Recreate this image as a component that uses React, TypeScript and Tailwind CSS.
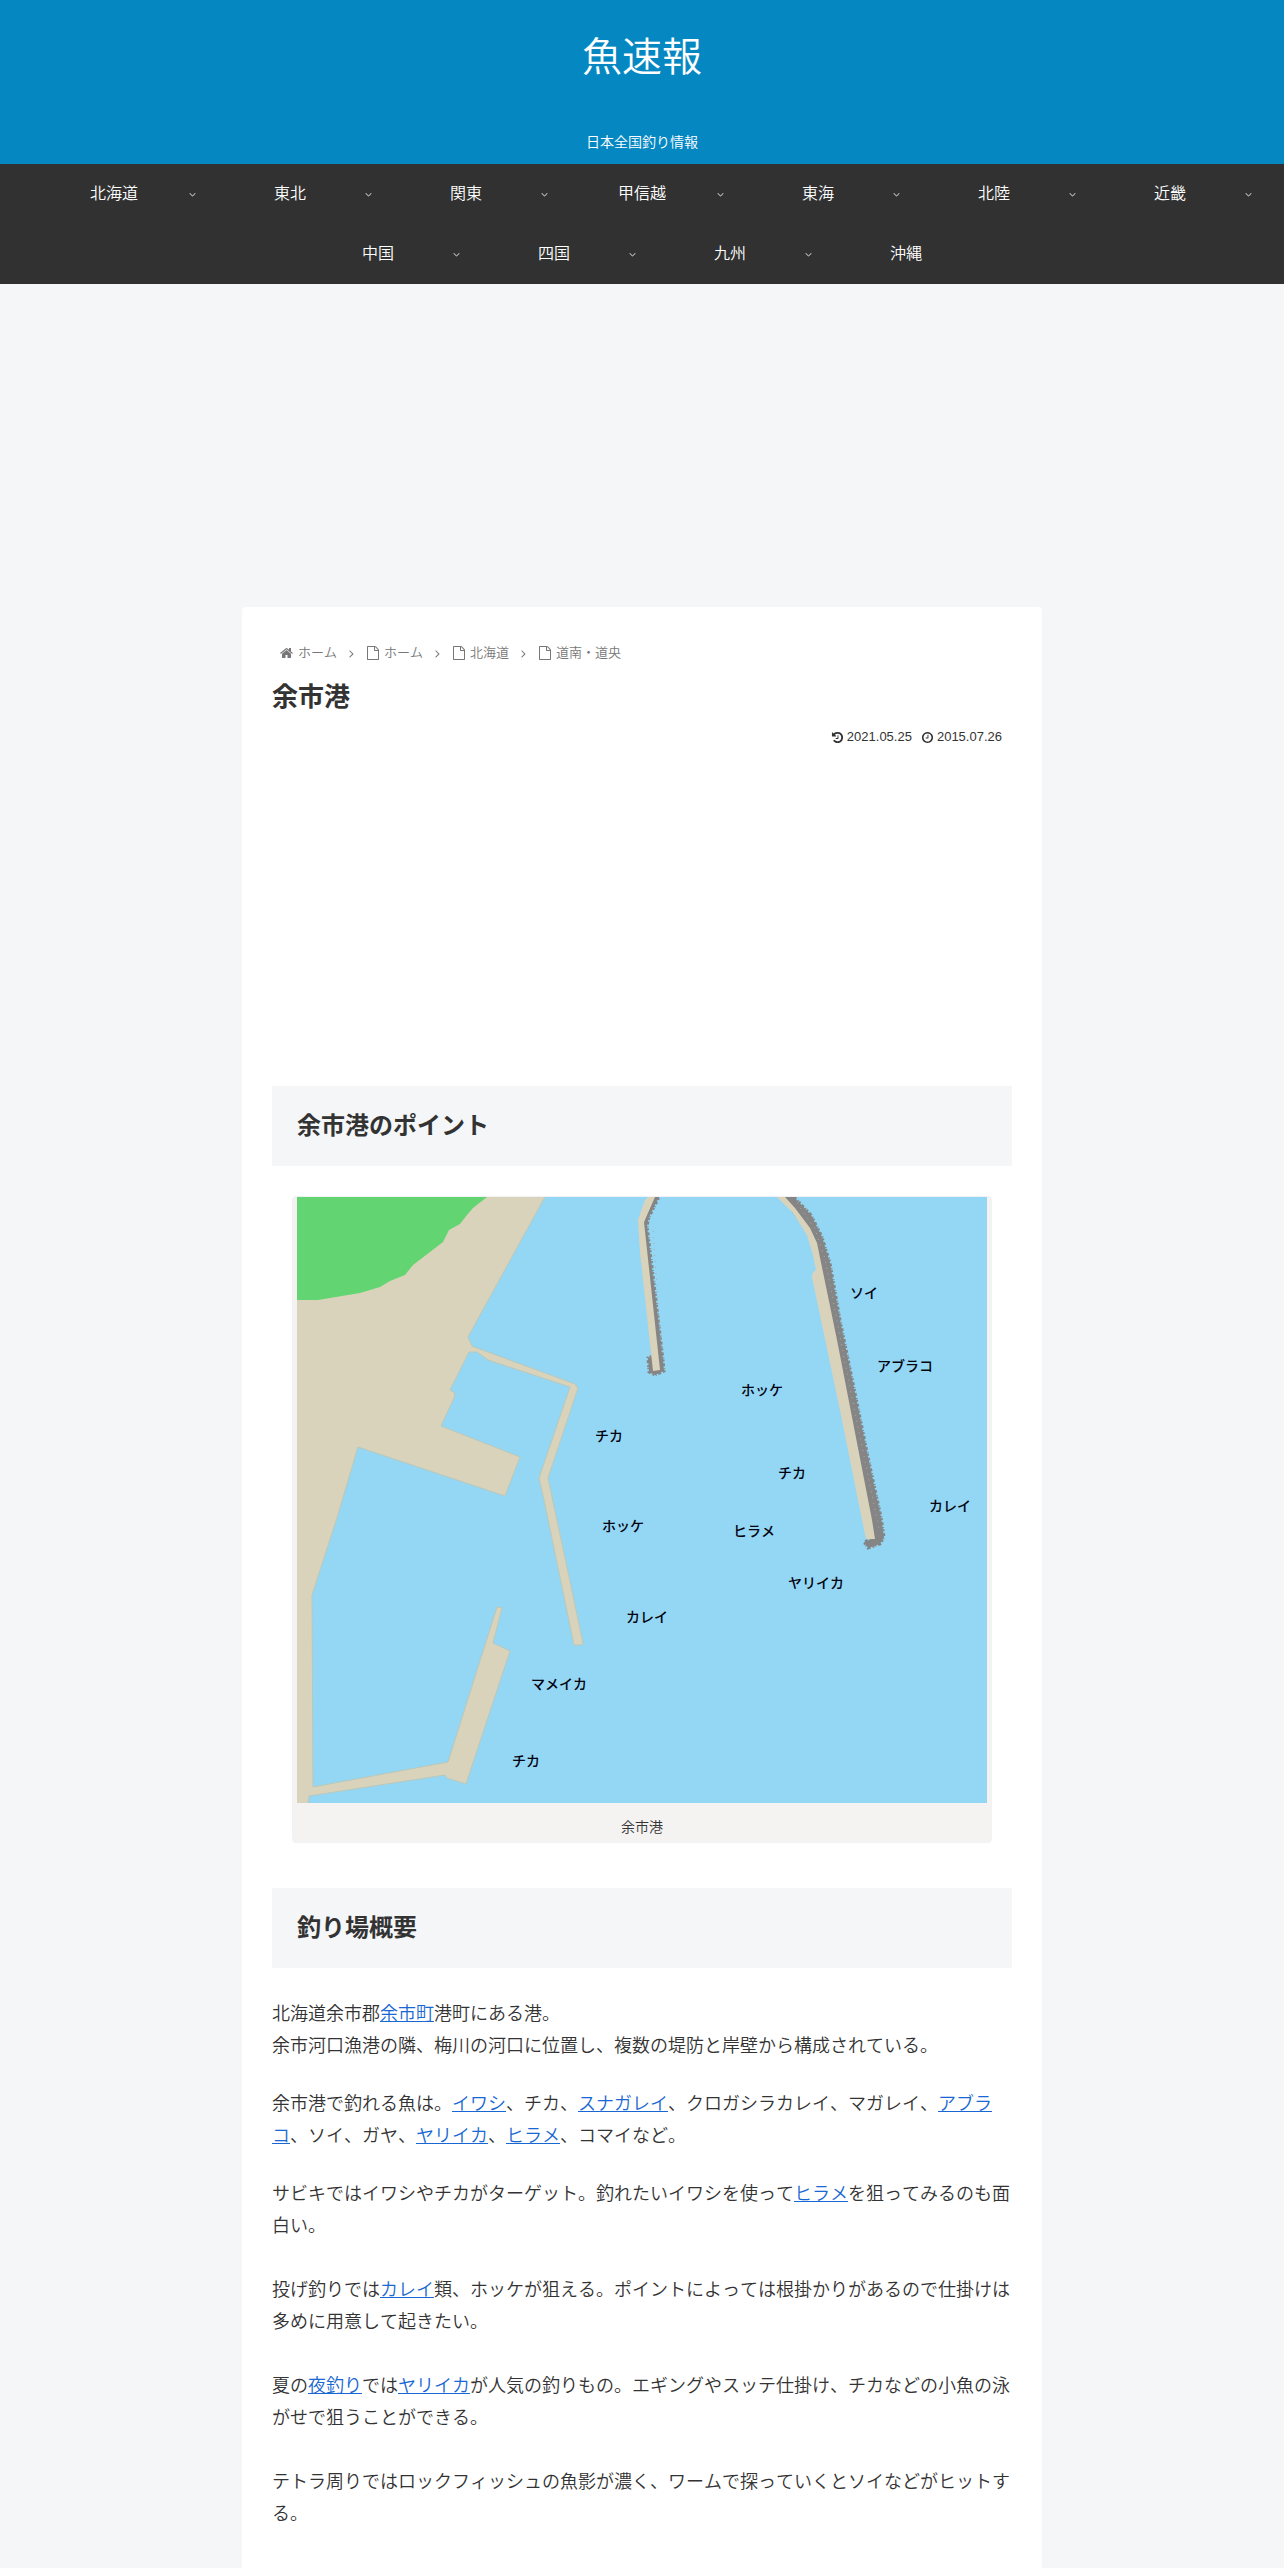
import { ReactNode } from 'react';

const ICONS = {
  home: 'M1408 992v480q0 26-19 45t-45 19h-384v-384h-256v384h-384q-26 0-45-19t-19-45v-480q0-1 .5-3t.5-3l575-474 575 474q1 2 1 6zm223-69l-62 74q-8 9-21 11h-3q-13 0-21-7l-692-577-692 577q-12 8-24 7-13-2-21-11l-62-74q-8-10-7-23.5t11-21.5l719-599q32-26 76-26t76 26l244 204v-195q0-14 9-23t23-9h192q14 0 23 9t9 23v408l219 182q10 8 11 21.5t-7 23.5z',
  file: 'M1596 380q28 28 48 76t20 88v1152q0 40-28 68t-68 28h-1344q-40 0-68-28t-28-68v-1600q0-40 28-68t68-28h896q40 0 88 20t76 48zm-444-244v376h376q-10-29-22-41l-313-313q-12-12-41-22zm384 1528v-1024h-416q-40 0-68-28t-28-68v-416h-768v1536h1280z',
  right: 'M1171 960q0 13-10 23l-466 466q-10 10-23 10t-23-10l-50-50q-10-10-10-23t10-23l393-393-393-393q-10-10-10-23t10-23l50-50q10-10 23-10t23 10l466 466q10 10 10 23z',
  down: 'M1395 736q0 13-10 23l-466 466q-10 10-23 10t-23-10l-466-466q-10-10-10-23t10-23l50-50q10-10 23-10t23 10l393 393 393-393q10-10 23-10t23 10l50 50q10 10 10 23z',
  clock: 'M1024 544v448q0 14-9 23t-23 9h-320q-14 0-23-9t-9-23v-64q0-14 9-23t23-9h224v-352q0-14 9-23t23-9h64q14 0 23 9t9 23zm416 352q0-148-73-273t-198-198-273-73-273 73-198 198-73 273 73 273 198 198 273 73 273-73 198-198 73-273zm224 0q0 209-103 385.5t-279.5 279.5-385.5 103-385.5-103-279.5-279.5-103-385.5 103-385.5 279.5-279.5 385.5-103 385.5 103 279.5 279.5 103 385.5z',
  history: 'M1664 896q0 156-61 298t-164 245-245 164-298 61q-172 0-327-72.5t-264-204.5q-7-10-6.5-22.5t8.5-20.5l137-138q10-9 25-9 16 2 23 12 73 95 179 147t225 52q104 0 198.5-40.5t163.5-109.5 109.5-163.5 40.5-198.5-40.5-198.5-109.5-163.5-163.5-109.5-198.5-40.5q-98 0-188 35.5t-160 101.5l137 138q31 30 14 69-17 40-59 40h-448q-26 0-45-19t-19-45v-448q0-42 40-59 39-17 69 14l130 129q107-101 244.5-156.5t284.5-55.5q156 0 298 61t245 164 164 245 61 298zm-640-288v448q0 14-9 23t-23 9h-320q-14 0-23-9t-9-23v-64q0-14 9-23t23-9h224v-352q0-14 9-23t23-9h64q14 0 23 9t9 23z',
};

const Icon = ({ name, className }: { name: keyof typeof ICONS; className: string }) => (
  <svg viewBox="0 0 1792 1792" fill="currentColor" className={className} aria-hidden="true">
    <path d={ICONS[name]} />
  </svg>
);

const regions = ['北海道', '東北', '関東', '甲信越', '東海', '北陸', '近畿', '中国', '四国', '九州', '沖縄'];

const crumbs = ['ホーム', 'ホーム', '北海道', '道南・道央'];

const fishLabels = [
  { name: 'ソイ', x: 553, y: 96 },
  { name: 'アブラコ', x: 580, y: 169 },
  { name: 'ホッケ', x: 444, y: 193 },
  { name: 'チカ', x: 298, y: 239 },
  { name: 'チカ', x: 481, y: 276 },
  { name: 'カレイ', x: 632, y: 309 },
  { name: 'ホッケ', x: 305, y: 329 },
  { name: 'ヒラメ', x: 436, y: 334 },
  { name: 'ヤリイカ', x: 491, y: 386 },
  { name: 'カレイ', x: 329, y: 420 },
  { name: 'マメイカ', x: 234, y: 487 },
  { name: 'チカ', x: 215, y: 564 },
];

const SiteHeader = () => (
  <header className="bg-[#0588c2] text-center text-white">
    <div className="pt-[25px] pb-[45px]">
      <a href="#" className="block text-[40px] leading-[64px]">魚速報</a>
    </div>
    <p className="pb-[14px] text-sm leading-4">日本全国釣り情報</p>
  </header>
);

const GlobalNav = () => (
  <nav className="bg-[#313131] text-white">
    <ul className="mx-auto flex max-w-[1236px] flex-wrap justify-center">
      {regions.map((region) => (
        <li key={region} className="relative w-[176px]">
          <a href="#" className="block text-center text-base leading-[60px]">{region}</a>
          {region !== '沖縄' && <Icon name="down" className="absolute top-[25px] right-1 size-[11px] text-[#c5c5c5]" />}
        </li>
      ))}
    </ul>
  </nav>
);

const Breadcrumbs = () => (
  <ol className="flex items-center px-2 text-[13px] leading-5 text-[#777]">
    {crumbs.map((crumb, i) => (
      <li key={i} className="flex items-center">
        {i > 0 && <Icon name="right" className="mx-2 size-[13px]" />}
        <a href="#" className="flex items-center gap-1">
          <Icon name={i === 0 ? 'home' : 'file'} className="size-[14px]" />
          {crumb}
        </a>
      </li>
    ))}
  </ol>
);

const Heading = ({ children }: { children: ReactNode }) => (
  <h2 className="bg-[#f4f6f8] px-[25px] py-5 text-2xl leading-10 font-bold">{children}</h2>
);

const Link = ({ children }: { children: ReactNode }) => (
  <a href="#" className="text-[#1967d2] underline">{children}</a>
);

const PortMap = () => (
  <svg viewBox="0 0 690 606" className="block w-full" role="img" aria-label="余市港">
    <rect width="690" height="606" fill="#94d7f5" />
    {/* 陸地と内側の防波堤 */}
    <path
      d="M-2 -2H249L171 140L175 149L180 151L278 187L281 191L251 281L260 323L286 446L285 448H277L247 303L242 281L273 190L191 163L180 155H172L153 193L158 196L157 201L144 229L223 260L208 299L61 250L40 321L15 398L16 590L151 565L200 410L205 411L196 446L213 454L169 587L150 581L148 578L12 599L11 608H-2Z"
      fill="#dad3bb"
      stroke="#b9c8ba"
      strokeWidth="1"
    />
    <path d="M0 0H190L176 11L170 18L163 27L152 33L146 45L116 68L108 78L93 84L83 90L63 96L21 103H0Z" fill="#62d572" />
    {/* テトラ */}
    <g fill="#858585" stroke="#858585" strokeWidth="3" strokeDasharray="3 2 1 1 2 2">
      <path d="M356 0H362L352 20L350 29L358 95L366 163L367 174L358 178L352 175L351 161L356 159L346 28Z" />
      <path d="M486 0H497L514 18L525 40L533 66L543 123L558 196L571 260L584 320L587 340L583 347L571 351L567 345L575 342L572 310L515 40Z" />
    </g>
    <g fill="none" stroke="#b0aaa6" strokeWidth="1" strokeDasharray="1 5">
      <path d="M356 34L365 160" />
      <path d="M500 6L518 32L528 62L552 186L582 332" />
    </g>
    {/* 外側の防波堤 */}
    <g fill="#dad3bb">
      <path d="M351 0H358L347 25L363 173L356 174L343 55L341 23L348 3Z" />
      <path d="M480 0H488L498 11L513 31L520 46L540 143L575 323L578 342H569L561 303L545 223L515 80L516 75L519 73L516 58L510 38L496 16Z" />
    </g>
    <g fill="#03030f" fontSize="14" fontWeight="500" dominantBaseline="central">
      {fishLabels.map((label) => (
        <text key={`${label.x}-${label.y}`} x={label.x} y={label.y}>{label.name}</text>
      ))}
    </g>
  </svg>
);

const Article = () => (
  <main className="mx-auto max-w-[800px] rounded-sm bg-white px-[30px] pt-9 pb-10">
    <Breadcrumbs />
    <h1 className="mt-[14px] text-[26px] leading-10 font-bold">余市港</h1>
    <div className="mt-[10px] flex justify-end gap-[9px] pr-[10px] text-[13px] leading-5">
      <span className="flex items-center gap-[3px]">
        <Icon name="history" className="size-[13px]" />
        <time dateTime="2021-05-25">2021.05.25</time>
      </span>
      <span className="flex items-center gap-[3px]">
        <Icon name="clock" className="size-[13px]" />
        <time dateTime="2015-07-26">2015.07.26</time>
      </span>
    </div>

    {/* 広告枠 */}
    <div className="h-[339px]" />

    <Heading>余市港のポイント</Heading>
    <figure className="mx-auto my-[30px] max-w-[700px] rounded-sm border border-[#f2f2f4] bg-[#f5f2f2] px-1">
      <PortMap />
      <figcaption className="pt-[14px] pb-[5px] text-center text-sm leading-5">余市港</figcaption>
    </figure>

    <div className="pt-[15px]">
      <Heading>釣り場概要</Heading>
    </div>
    <div className="mt-[30px] space-y-[26px] text-lg leading-8">
      <p>
        北海道余市郡<Link>余市町</Link>港町にある港。<br />
        余市河口漁港の隣、梅川の河口に位置し、複数の堤防と岸壁から構成されている。
      </p>
      <p>
        余市港で釣れる魚は。<Link>イワシ</Link>、チカ、<Link>スナガレイ</Link>、クロガシラカレイ、マガレイ、<Link>アブラコ</Link>、ソイ、ガヤ、<Link>ヤリイカ</Link>、<Link>ヒラメ</Link>、コマイなど。
      </p>
      <p>
        サビキではイワシやチカがターゲット。釣れたいイワシを使って<Link>ヒラメ</Link>を狙ってみるのも面白い。
        <br />
        <br />
        投げ釣りでは<Link>カレイ</Link>類、ホッケが狙える。ポイントによっては根掛かりがあるので仕掛けは多めに用意して起きたい。
        <br />
        <br />
        夏の<Link>夜釣り</Link>では<Link>ヤリイカ</Link>が人気の釣りもの。エギングやスッテ仕掛け、チカなどの小魚の泳がせで狙うことができる。
        <br />
        <br />
        テトラ周りではロックフィッシュの魚影が濃く、ワームで探っていくとソイなどがヒットする。
      </p>
    </div>
  </main>
);

const App = () => (
  <div
    lang="ja"
    className="min-h-screen bg-[#f4f6f8] font-['Liberation_Sans','Noto_Sans_CJK_JP',sans-serif] text-[#333] [font-kerning:none] [font-weight:350]"
  >
    <SiteHeader />
    <GlobalNav />
    {/* 広告枠 */}
    <div className="h-[323px]" />
    <Article />
  </div>
);

export default App;
